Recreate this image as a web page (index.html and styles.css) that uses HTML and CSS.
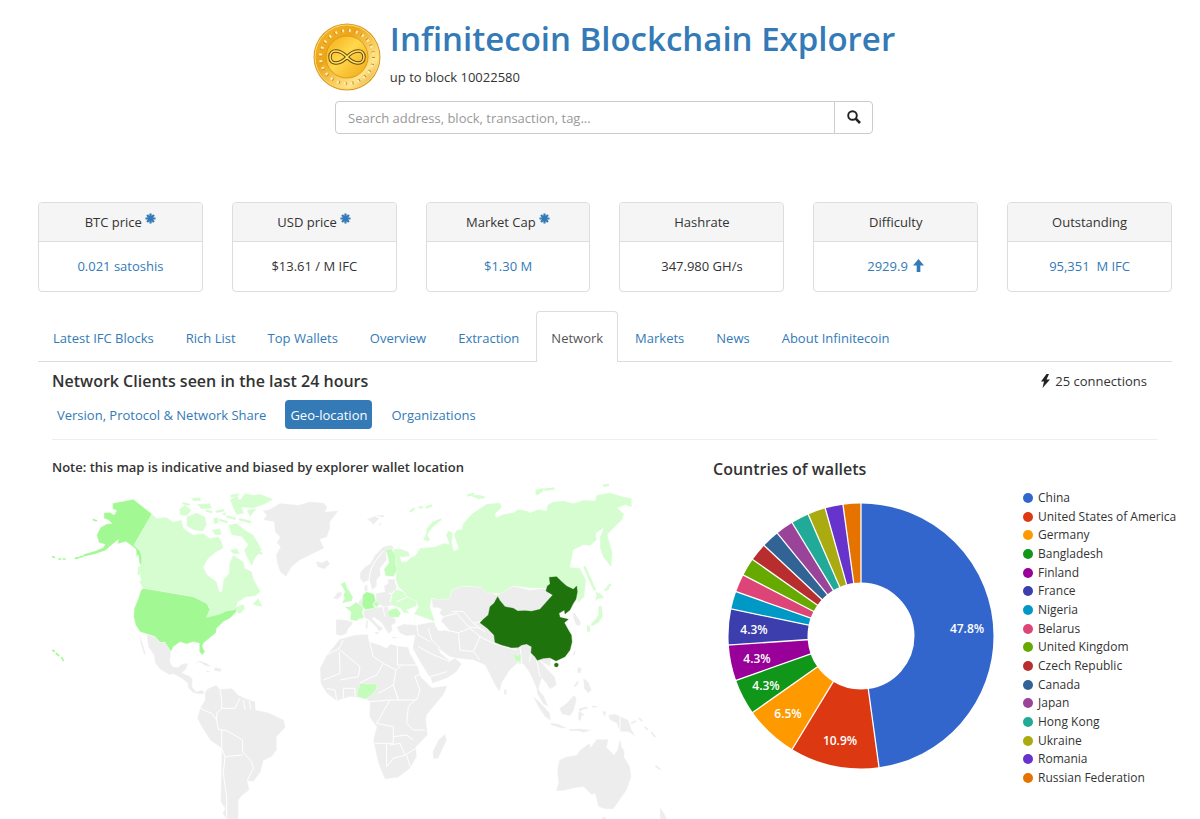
FILE: index.html
```html
<!DOCTYPE html>
<html lang="en">
<head>
<meta charset="utf-8">
<meta name="viewport" content="width=device-width, initial-scale=1">
<title>Infinitecoin Blockchain Explorer</title>
<link rel="stylesheet" href="styles.css">
</head>
<body>
<svg class="defs" width="0" height="0" aria-hidden="true">
  <symbol id="asterisk" viewBox="0 0 12 12"><path d="M6 0.500V11.500M0.500 6H11.500M2.200 2.200L9.800 9.800M9.800 2.200L2.200 9.800" stroke="currentColor" stroke-width="2.400"/></symbol>
</svg>
<header class="masthead">
  <div class="brand">
    <svg class="coin" viewBox="0 0 68 68" role="img" aria-label="Infinitecoin logo">
      <defs>
        <linearGradient id="rim" x1="0" y1="0" x2="1" y2="1"><stop offset="0" stop-color="#f5b628"/><stop offset=".35" stop-color="#eda51a"/><stop offset=".75" stop-color="#ffe58a"/><stop offset="1" stop-color="#d48e14"/></linearGradient>
        <linearGradient id="face" x1="0" y1="0" x2="1" y2="1"><stop offset="0" stop-color="#f3aa16"/><stop offset=".45" stop-color="#ffd84c"/><stop offset="1" stop-color="#f0a616"/></linearGradient>
      </defs>
      <circle cx="34" cy="34" r="33.500" fill="#d99a24"/>
      <circle cx="34" cy="34" r="32" fill="url(#rim)" stroke="#ffdc70"/>
      <circle cx="34" cy="34" r="26.500" fill="none" stroke="#d08a1c" stroke-width="3" stroke-dasharray="2.500 4.440"/>
      <circle cx="34" cy="34" r="26.500" fill="none" stroke="#fff0b0" stroke-width="3" stroke-dasharray="2 4.940" stroke-dashoffset="-1"/>
      <circle cx="34" cy="34" r="21" fill="url(#face)" stroke="#e09a18"/>
      <path d="M34 34C28 27 17 25 17 34S28 41 34 34S51 25 51 34S40 41 34 34Z" fill="none" stroke="#6d4a08" stroke-width="3.500"/>
      <path d="M34 34C28 27 17 25 17 34S28 41 34 34S51 25 51 34S40 41 34 34Z" fill="none" stroke="#ffe36b" stroke-width="1.500"/>
    </svg>
    <div>
      <h1 class="title"><a href="#">Infinitecoin Blockchain Explorer</a></h1>
      <p class="subtitle">up to block 10022580</p>
    </div>
  </div>
  <form class="search">
    <input class="search-input" type="text" aria-label="Search" placeholder="Search address, block, transaction, tag...">
    <button class="search-button" type="button" aria-label="Search"><svg width="14" height="14" viewBox="0 0 14 14"><circle cx="5.500" cy="5.500" r="4.300" fill="none" stroke="#222" stroke-width="1.900"/><path d="M8.700 8.700L13 13" stroke="#222" stroke-width="2.600"/></svg></button>
  </form>
</header>

<main class="container">
  <section class="cards">
    <article class="card"><h2 class="card-head">BTC price <svg class="star"><use href="#asterisk"/></svg></h2><p class="card-body"><a href="#">0.021 satoshis</a></p></article>
    <article class="card"><h2 class="card-head">USD price <svg class="star"><use href="#asterisk"/></svg></h2><p class="card-body">$13.61 / M IFC</p></article>
    <article class="card"><h2 class="card-head">Market Cap <svg class="star"><use href="#asterisk"/></svg></h2><p class="card-body"><a href="#">$1.30 M</a></p></article>
    <article class="card"><h2 class="card-head">Hashrate</h2><p class="card-body">347.980 GH/s</p></article>
    <article class="card"><h2 class="card-head">Difficulty</h2><p class="card-body"><a href="#">2929.9 <svg class="arrow" viewBox="0 0 12 14"><path d="M6 0L12 7H8V14H4V7H0Z" fill="currentColor"/></svg></a></p></article>
    <article class="card"><h2 class="card-head">Outstanding</h2><p class="card-body"><a href="#">95,351&nbsp; M IFC</a></p></article>
  </section>

  <nav class="tabs">
    <a class="tab" href="#">Latest IFC Blocks</a>
    <a class="tab" href="#">Rich List</a>
    <a class="tab" href="#">Top Wallets</a>
    <a class="tab" href="#">Overview</a>
    <a class="tab" href="#">Extraction</a>
    <a class="tab active" href="#" aria-current="page">Network</a>
    <a class="tab" href="#">Markets</a>
    <a class="tab" href="#">News</a>
    <a class="tab" href="#">About Infinitecoin</a>
  </nav>

  <section class="panel">
    <div class="panel-head">
      <h2 class="heading">Network Clients seen in the last 24 hours</h2>
      <p class="connections"><svg width="11" height="14" viewBox="0 0 11 14"><path d="M6.500 0L1 7.500H4L2.500 14L10 5.500H6.500L9 0Z" fill="#222"/></svg> 25 connections</p>
    </div>
    <nav class="pills">
      <a class="pill" href="#">Version, Protocol &amp; Network Share</a>
      <a class="pill current" href="#">Geo-location</a>
      <a class="pill" href="#">Organizations</a>
    </nav>
    <div class="columns">
      <div class="map-column">
        <h3 class="note">Note: this map is indicative and biased by explorer wallet location</h3>
        <svg class="map" viewBox="52 480 661 339" role="img" aria-label="World map of wallets by country">
          <!-- Asia and Europe -->
          <g class="land" transform="translate(250 480) scale(.33333)">
            <path class="none" d="M440 442L460 432L500 435L550 425L572 450L598 450L580 432L565 415L560 395L548 380L545 355L570 358L600 355L605 330L640 318L690 322L740 345L790 318L840 330L890 325L925 400L900 560L868 540L890 565L914 590L920 615L900 628L888 608L875 595L865 628L883 650L895 680L880 672L864 645L858 620L840 580L820 552L802 550L780 570L757 605L748 635L735 615L720 585L705 555L670 540L620 535L600 530L565 505L572 520L600 542L615 534L635 552L620 575L590 595L547 610L535 585L510 545L488 505L495 465L470 468L450 460Z"/>
            <path class="none" d="M38 92L60 88L90 70L145 75L180 65L220 68L232 82L225 95L265 92L240 125L240 145L230 172L210 178L222 205L175 228L150 240L125 260L108 290L90 275L82 250L78 225L92 200L80 188L90 172L75 155L72 125L40 120L50 105Z"/>
            <path class="none" d="M198 243L215 248L232 240L240 252L222 268L203 260Z"/>
            <path class="none" d="M350 118L375 108L388 115L370 135L362 125ZM375 105L405 105L398 113ZM385 132L396 128L390 137Z"/>
            <path class="none" d="M330 278L345 260L360 252L375 225L400 200L425 195L432 206L408 213L410 240L398 255L390 265L392 285L380 300L380 318L367 330L358 300L340 308L330 295Z"/>
            <path class="none" d="M345 335L342 320L352 312L353 332ZM250 355L262 338L275 335L275 348L262 358Z"/>
            <path class="none" d="M378 340L405 335L402 318L415 310L412 298L434 297L440 325L425 340L424 378L400 380L378 366Z"/>
            <path class="none" d="M258 418L290 420L308 426L306 435L295 445L290 460L275 467L258 464Z"/>
            <path class="none" d="M340 392L375 382L415 380L418 405L438 418L436 430L425 435L428 450L416 462L405 445L395 428L372 412L366 415L382 433L399 445L388 455L378 440L360 422L342 412ZM318 378L335 352L338 370L340 384ZM372 457L388 455L382 464ZM348 422L354 422L353 446L347 445ZM425 470L448 472L430 476Z"/>
            <path class="none" d="M968 400L975 398L980 408L992 425L990 438L978 435L970 415Z"/>
            <path class="c2" d="M437 298L440 265L436 230L428 208L450 206L475 215L480 228L460 232L450 230L455 245L470 245L480 235L497 225L510 205L555 200L580 190L598 192L588 165L595 152L608 158L606 190L612 214L625 205L612 165L620 150L635 148L640 130L665 102L710 72L750 68L755 82L735 102L738 113L760 103L790 98L805 88L830 92L840 98L865 88L890 92L892 75L910 65L940 62L970 70L1000 60L1035 62L1040 45L1080 38L1120 50L1145 55L1145 82L1125 75L1102 84L1122 102L1118 118L1090 145L1072 165L1087 215L1084 262L1060 232L1050 205L1050 170L1060 145L1038 160L1040 180L1020 197L1000 195L970 210L960 262L990 265L1008 300L1003 350L985 368L975 330L950 315L905 290L890 325L840 325L790 318L750 342L710 337L690 322L640 318L605 330L600 355L570 360L545 355L540 380L555 425L520 412L492 403L505 380L495 362L470 350L462 335L445 320Z"/>
            <path class="c2" d="M519 178L535 185L540 178L532 165L545 145L575 120L573 115L548 125L530 145L528 163ZM652 44l20-5l-5 10ZM670 50l18-5l18 5l-20 8ZM855 30l20-5l5 10l-20 12ZM880 25l35-2l-10 7ZM1062 14l14-3l-5 8Z"/>
            <path class="isle2" d="M482 94L492 86M508 82h8M530 82l14-5M670 48l30 4M655 46l14-4M860 40l18-12M885 29l26-3M1062 17l12-2M1066 330l8-5M1074 320l6-5"/>
            <path class="c2" d="M1000 258L1010 270L1025 300L1038 335L1030 328L1016 300ZM1035 365L1040 345L1035 335L1050 340L1062 352L1045 355ZM1045 380L1052 376L1058 410L1045 430L1028 432L1020 435L1035 418L1045 405ZM1010 440l10-4l-2 16l-6 6Z"/>
            <path class="isle2" d="M1004 262L1034 328M1052 382L1054 408L1040 425M1026 434l8-3M1014 440l4 12M1042 352l14 0"/>
            <path class="c2" d="M424 345L438 328L460 335L472 352L498 362L500 378L470 390L478 400L460 398L452 385L440 380L422 375Z"/>
            <path class="c3" d="M418 390L440 384L453 400L446 412L420 412L412 402ZM368 373L378 362L390 372L380 382Z"/>
            <path class="c3" d="M405 208L425 207L438 228L437 250L442 270L430 290L407 288L402 268L417 248L412 225Z"/>
            <path class="c3" d="M272 312L285 305L292 325L300 335L309 352L305 364L275 370L284 355L280 345L285 335Z"/>
            <path class="c3" d="M283 380L300 380L318 366L340 382L337 398L342 414L326 417L322 423L300 420L303 395Z"/>
            <path class="c4" d="M338 345L350 335L372 342L377 362L368 372L374 384L345 389L336 375Z"/>
            <path class="water" d="M545 388L560 382L575 388L568 400L580 410L572 425L585 435L580 452L565 452L556 435L555 410Z"/>
            <path class="line" d="M380 340L378 320M356 304L362 270L375 245L400 213M398 380L405 410M415 340L425 340M420 365L425 345M440 365L470 352M500 435L505 465L540 485M535 445L545 480L570 505M585 450L625 458L630 510L670 515L690 540M580 410L620 400L655 440L690 445M625 458L660 445L690 470L670 515M605 395L640 395L670 430L710 420M670 430L705 455M690 470L730 490L800 510M505 500L540 520L600 545M545 610L540 590L590 575M810 500L815 550M845 510L838 545M860 540L870 590"/>
            <path class="c3" d="M790 520L803 528L812 520L813 544L803 545L795 540Z"/>
            <path class="c6" d="M690 428L700 418L715 405L720 380L732 370L743 350L750 362L765 380L790 385L803 393L825 392L845 394L870 388L890 365L908 345L888 333L892 318L900 312L898 292L920 290L935 305L950 318L970 328L980 318L982 335L978 358L970 370L960 390L945 402L943 390L927 400L930 412L955 418L943 428L955 450L964 465L966 485L960 510L945 530L918 543L900 533L880 535L862 541L855 530L843 518L845 500L830 492L815 495L805 502L785 503L755 495L735 487L732 465L712 445Z"/>
            <circle class="c6" cx="919" cy="555" r="6"/>
          </g>
          <!-- North America -->
          <g class="land" transform="translate(40 480) scale(.33333)">
            <path class="c2" d="M336 102L350 115L378 112L400 125L425 120L430 145L460 165L490 160L510 175L535 170L545 185L550 205L530 215L505 235L490 262L502 285L530 305L538 335L546 335L550 300L567 280L568 250L580 225L610 245L615 265L635 275L642 300L662 335L645 348L615 352L592 368L590 380L610 372L615 385L600 402L588 395L560 392L535 408L500 412L510 385L500 370L460 350L310 325L300 290L300 215L282 195ZM638 372L655 355L668 380L650 378Z"/>
            <path class="c2" d="M418 88L435 75L455 90L440 108L420 105ZM440 110L470 98L495 110L500 135L488 155L460 150L440 138ZM452 55L478 52L485 62L462 64ZM470 72L510 70L515 85L485 88ZM520 115L535 112L535 130L522 132ZM545 102L560 95L555 108ZM570 60L590 45L600 60L615 40L640 45L660 42L700 58L675 72L640 85L605 82L612 100L590 105L580 85ZM620 90L650 85L630 110ZM565 135L590 130L615 150L640 165L655 190L665 210L645 235L635 258L620 230L612 210L625 195L605 170L575 165ZM515 150L540 145L545 165L525 165ZM570 210L590 205L600 222L580 222Z"/>
            <path class="isle2" d="M530 95l20-4M562 110l22 6M540 120l20 6M600 118l30 8M430 70l16 4M500 92l14 4M650 215l14 5M575 48l18-4M298 262l-2 20M302 305l8 14"/>
            <path class="c5" d="M218 70L280 58L336 102L282 195L300 213L305 230L305 255L298 250L295 225L290 232L288 208L272 195L258 185L232 192L236 178L215 195L195 212L165 222L130 228L132 223L165 213L190 203L195 193L177 188L170 165L182 142L200 132L216 130L205 120L192 115L192 98L210 97L222 105L230 92L218 86Z"/>
            <path class="isle5" d="M160 119l9 3M106 235l10-2M120 231l8-2M38 230l5 2M57 237l5 0M70 237l5 0M38 511l5 3M49 520l7 7M65 533l5 8M133 226L165 218L192 205"/>
            <path class="c5" d="M310 325L460 350L500 370L510 388L500 412L540 402L560 392L583 390L588 380L588 397L570 415L550 425L530 445L528 458L490 490L487 500L495 515L487 525L478 515L478 490L460 485L440 492L420 486L400 500L393 515L380 505L375 487L360 488L345 470L320 462L300 455L287 435L281 410L283 385L295 355L303 330Z"/>
          </g>
          <!-- Latin America and Africa -->
          <g class="land" transform="translate(110 640) scale(.33333)">
            <path class="none" d="M110 -18L135 -10L150 8L165 7L183 35L180 65L188 80L205 82L215 72L235 70L228 88L215 98L238 108L248 118L246 140L258 155L275 150L284 156L280 162L265 162L250 158L235 145L232 128L215 115L190 102L178 104L150 88L135 68L132 45L115 20ZM88 -22L95 0L108 45L102 42L93 15ZM252 68L270 62L290 70L305 80L288 78L270 67ZM312 82L335 86L332 95L312 92ZM288 92l12 1v3h-12Z"/>
            <path class="none" d="M290 148L318 135L330 148L365 145L385 165L405 175L435 185L437 210L475 218L522 240L526 262L500 290L500 330L485 350L460 362L452 395L430 425L412 422L418 450L398 465L385 480L385 540L350 540L338 520L345 505L332 485L335 325L300 300L275 260L262 235L270 205L285 180L285 160Z"/>
            <path class="none" d="M688 -2L735 -15L775 -17L778 5L810 15L830 25L840 12L865 18L895 22L900 40L925 85L932 110L948 125L965 143L1012 137L1000 165L970 200L950 225L948 240L953 285L918 320L920 350L900 385L865 412L825 418L805 370L790 300L800 260L778 230L780 185L765 175L740 172L720 170L680 182L650 160L632 130L630 85L650 45L675 15Z"/>
            <path class="c3" d="M742 155L750 130L785 132L803 130L798 150L785 165L765 178L742 170Z"/>
            <path class="line" d="M330 150L335 180L335 205L320 220L320 240L325 268L350 272L398 300L398 335L425 365L430 385L412 420M270 205L305 220L320 240M335 205L375 205L390 175M400 180L405 208M418 182L422 208M335 270V325L345 350L340 400L350 470L350 540M345 350L398 345"/>
            <path class="line" d="M700 0L688 25L650 45M688 35L690 100L640 120M690 30L750 80L745 110L690 120M775 -10L790 50L820 70L800 105L750 128M862 18V75H920M820 70L858 90L850 135L805 160M858 90L875 75M850 135L865 180H920L930 150L915 110L935 100M915 180L895 200L890 250L910 270L945 270M780 185L840 180L865 180M840 180L820 215L800 250L850 260L850 310L795 310M850 290L890 285L910 300M830 310V380L850 355L885 345L918 325M890 345L900 380M840 315L870 310L885 345M680 180L675 150L650 145M700 175V145L735 145V170"/>
          </g>
          <!-- Oceania and the islands -->
          <g class="land" transform="translate(430 640) scale(.33333)">
            <path class="none" d="M388 360L410 350L440 345L450 330L478 310L482 322L500 298L535 298L530 322L552 345L562 330L570 295L575 320L584 335L582 350L600 380L604 410L590 450L550 507L525 507L505 500L495 460L485 465L460 440L430 445L400 452L378 453L385 430L382 390ZM515 530L530 532L525 540L518 540ZM690 500L705 525L715 545H690Z"/>
            <path class="none" d="M45 282L50 300L25 355L10 357L8 335L25 300ZM222 148L230 150L230 164L222 163ZM308 168L325 182L360 220L362 242L345 230L325 200ZM360 248L385 252L412 265L395 265L365 256ZM388 205L410 190L432 165L440 175L432 210L420 228L395 222ZM420 268L450 266L485 270L460 278L445 272ZM448 205L475 200L460 208L450 215L465 225L455 228L452 242L445 240ZM535 225L555 222L595 240L605 270L618 290L595 275L570 275L560 250L540 240ZM515 212L528 215L525 232ZM443 80L455 85L452 100L442 98ZM460 115L475 125L485 150L475 160L462 145ZM435 140L445 125L440 138Z"/>
            <path class="isle" d="M435 138l8-12M488 200h10M605 250l12-6M628 235l7 7M645 262l8 6M665 278l10 12M678 378l12 10M434 35l-2 8M320 120l5 40l20 30M450 208l20-5M448 238v-20M420 270h30"/>
            <path class="line" d="M570 225V275"/>
          </g>
        </svg>
      </div>

      <div class="chart-column">
        <h3 class="heading">Countries of wallets</h3>
        <div class="chart">
          <svg class="donut" viewBox="713 488 300 290" role="img" aria-label="Share of wallets by country">
            <g class="slices" transform="rotate(-90 861 636)" fill="none" stroke-width="79">
              <circle cx="861" cy="636" r="93" pathLength="46" stroke="#3366cc" stroke-dasharray="22 24"/>
              <circle cx="861" cy="636" r="93" pathLength="46" stroke="#dc3912" stroke-dasharray="5 41" stroke-dashoffset="-22"/>
              <circle cx="861" cy="636" r="93" pathLength="46" stroke="#ff9900" stroke-dasharray="3 43" stroke-dashoffset="-27"/>
              <circle cx="861" cy="636" r="93" pathLength="46" stroke="#109618" stroke-dasharray="2 44" stroke-dashoffset="-30"/>
              <circle cx="861" cy="636" r="93" pathLength="46" stroke="#990099" stroke-dasharray="2 44" stroke-dashoffset="-32"/>
              <circle cx="861" cy="636" r="93" pathLength="46" stroke="#3b3eac" stroke-dasharray="2 44" stroke-dashoffset="-34"/>
              <circle cx="861" cy="636" r="93" pathLength="46" stroke="#0099c6" stroke-dasharray="1 45" stroke-dashoffset="-36"/>
              <circle cx="861" cy="636" r="93" pathLength="46" stroke="#dd4477" stroke-dasharray="1 45" stroke-dashoffset="-37"/>
              <circle cx="861" cy="636" r="93" pathLength="46" stroke="#66aa00" stroke-dasharray="1 45" stroke-dashoffset="-38"/>
              <circle cx="861" cy="636" r="93" pathLength="46" stroke="#b82e2e" stroke-dasharray="1 45" stroke-dashoffset="-39"/>
              <circle cx="861" cy="636" r="93" pathLength="46" stroke="#316395" stroke-dasharray="1 45" stroke-dashoffset="-40"/>
              <circle cx="861" cy="636" r="93" pathLength="46" stroke="#994499" stroke-dasharray="1 45" stroke-dashoffset="-41"/>
              <circle cx="861" cy="636" r="93" pathLength="46" stroke="#22aa99" stroke-dasharray="1 45" stroke-dashoffset="-42"/>
              <circle cx="861" cy="636" r="93" pathLength="46" stroke="#aaaa11" stroke-dasharray="1 45" stroke-dashoffset="-43"/>
              <circle cx="861" cy="636" r="93" pathLength="46" stroke="#6633cc" stroke-dasharray="1 45" stroke-dashoffset="-44"/>
              <circle cx="861" cy="636" r="93" pathLength="46" stroke="#e67300" stroke-dasharray="1 45" stroke-dashoffset="-45"/>
            </g>
            <g stroke="#fff" stroke-width="1.300">
              <path d="M861 585V502"/>
              <path d="M861 585V502" transform="rotate(172.174 861 636)"/>
              <path d="M861 585V502" transform="rotate(211.304 861 636)"/>
              <path d="M861 585V502" transform="rotate(234.783 861 636)"/>
              <path d="M861 585V502" transform="rotate(250.435 861 636)"/>
              <path d="M861 585V502" transform="rotate(266.087 861 636)"/>
              <path d="M861 585V502" transform="rotate(281.739 861 636)"/>
              <path d="M861 585V502" transform="rotate(289.565 861 636)"/>
              <path d="M861 585V502" transform="rotate(297.391 861 636)"/>
              <path d="M861 585V502" transform="rotate(305.217 861 636)"/>
              <path d="M861 585V502" transform="rotate(313.043 861 636)"/>
              <path d="M861 585V502" transform="rotate(320.870 861 636)"/>
              <path d="M861 585V502" transform="rotate(328.696 861 636)"/>
              <path d="M861 585V502" transform="rotate(336.522 861 636)"/>
              <path d="M861 585V502" transform="rotate(344.348 861 636)"/>
              <path d="M861 585V502" transform="rotate(352.174 861 636)"/>
            </g>
            <g class="shares">
              <text x="967" y="633">47.8%</text>
              <text x="840" y="745">10.9%</text>
              <text x="788" y="718">6.5%</text>
              <text x="766" y="690">4.3%</text>
              <text x="757" y="663">4.3%</text>
              <text x="754" y="634">4.3%</text>
            </g>
          </svg>
          <ul class="legend">
            <li style="color:#3366cc"><span>China</span></li>
            <li style="color:#dc3912"><span>United States of America</span></li>
            <li style="color:#ff9900"><span>Germany</span></li>
            <li style="color:#109618"><span>Bangladesh</span></li>
            <li style="color:#990099"><span>Finland</span></li>
            <li style="color:#3b3eac"><span>France</span></li>
            <li style="color:#0099c6"><span>Nigeria</span></li>
            <li style="color:#dd4477"><span>Belarus</span></li>
            <li style="color:#66aa00"><span>United Kingdom</span></li>
            <li style="color:#b82e2e"><span>Czech Republic</span></li>
            <li style="color:#316395"><span>Canada</span></li>
            <li style="color:#994499"><span>Japan</span></li>
            <li style="color:#22aa99"><span>Hong Kong</span></li>
            <li style="color:#aaaa11"><span>Ukraine</span></li>
            <li style="color:#6633cc"><span>Romania</span></li>
            <li style="color:#e67300"><span>Russian Federation</span></li>
          </ul>
        </div>
      </div>
    </div>
  </section>
</main>
</body>
</html>
```
FILE: styles.css
```css
* { box-sizing: border-box; }
body { margin: 0; background: #fff; color: #333; font: 13px/20px "Open Sans", "Noto Sans", sans-serif; }
h1, h2, h3, p, ul { margin: 0; padding: 0; }
a { color: #337ab7; text-decoration: none; }
svg { display: block; }
.defs { position: absolute; }
.masthead { display: flex; flex-direction: column; align-items: center; padding: 19px 30px 0 38px; }
.brand { display: flex; gap: 9px; }
.coin { width: 68px; height: 68px; margin-top: 4px; }
.title { font-size: 33px; line-height: 40px; font-weight: 600; }
.subtitle { margin-top: 8px; }
.search { display: flex; width: 538px; max-width: 100%; height: 33px; margin-top: 10px; }
.search-input { flex: 1; min-width: 0; padding: 0 12px; border: 1px solid #ccc; border-radius: 4px 0 0 4px; font: inherit; color: #555; }
.search-input::placeholder { color: #999; opacity: 1; }
.search-button { width: 39px; margin-left: -1px; padding: 0 0 2px; display: flex; align-items: center; justify-content: center; border: 1px solid #ccc; border-radius: 0 4px 4px 0; background: #fff; }
.container { padding: 68px 28px 0 38px; }
.cards { display: grid; grid-template-columns: repeat(6, 1fr); gap: 29px; }
.card { border: 1px solid #ddd; border-radius: 4px; text-align: center; overflow: hidden; }
.card-head { font-size: 13px; line-height: 20px; font-weight: 400; padding: 9px 10px; background: #f5f5f5; border-bottom: 1px solid #ddd; }
.card-body { padding: 14px 10px 15px; }
.star { display: inline-block; width: 11px; height: 11px; margin-bottom: 3px; color: #337ab7; }
.star use { width: 11px; height: 11px; }
.arrow { display: inline-block; width: 11px; height: 13px; margin: 0 0 -1px 2px; }
.tabs { display: flex; gap: 2px; margin-top: 19px; border-bottom: 1px solid #ddd; }
.tab { padding: 16px 14px 13px; border: 1px solid transparent; border-bottom: 0; border-radius: 4px 4px 0 0; white-space: nowrap; }
.tab.active { margin-bottom: -1px; padding-bottom: 14px; border-color: #ddd; background: #fff; color: #555; }
.panel { padding: 9px 0 0 14px; }
.panel-head { display: flex; justify-content: space-between; align-items: center; padding-right: 25px; }
.heading { font-size: 16px; line-height: 20px; font-weight: 600; }
.connections { display: flex; align-items: center; gap: 4px; }
.pills { display: flex; gap: 14px; margin-right: 15px; padding: 9px 0 10px; border-bottom: 1px solid #eee; }
.pill { padding: 5px 5px 4px; border-radius: 4px; }
.pill.current { background: #337ab7; color: #fff; }
.columns { display: grid; grid-template-columns: minmax(0, 661fr) minmax(0, 459fr); padding-top: 17px; }
.note { font-size: 13px; line-height: 20px; font-weight: 600; }
.map { width: 100%; margin-top: 3px; }
.land { stroke: #fff; stroke-width: 1; stroke-linejoin: round; }
.none { fill: #ededed; }
.c2 { fill: #d5fdd0; }
.c3 { fill: #c4fcbc; }
.c4 { fill: #abfa9f; }
.c5 { fill: #a2f993; }
.c6 { fill: #1f730c; stroke: #1f730c; }
.water { fill: #fff; }
.line { fill: none; stroke: #fff; stroke-width: 3; }
.isle, .isle2, .isle5 { fill: none; stroke: #ededed; stroke-width: 5; stroke-linecap: round; }
.isle2 { stroke: #d5fdd0; stroke-width: 7; }
.isle5 { stroke: #a2f993; }
.chart-column .heading { padding-top: 2px; }
.chart { display: grid; grid-template-columns: 300px 1fr; margin-top: 9px; }
.donut { width: 100%; }
.shares { fill: #fff; font-size: 12px; font-weight: 600; text-anchor: middle; }
.legend { display: flex; flex-direction: column; justify-content: space-between; height: 296px; margin: 2px 0 0 10px; list-style: none; font-size: 12px; line-height: 16px; white-space: nowrap; }
.legend li { display: flex; align-items: center; gap: 5px; }
.legend li::before { content: ""; flex: none; width: 10px; height: 10px; border-radius: 50%; background: currentColor; }
.legend span { color: #333; }
```
